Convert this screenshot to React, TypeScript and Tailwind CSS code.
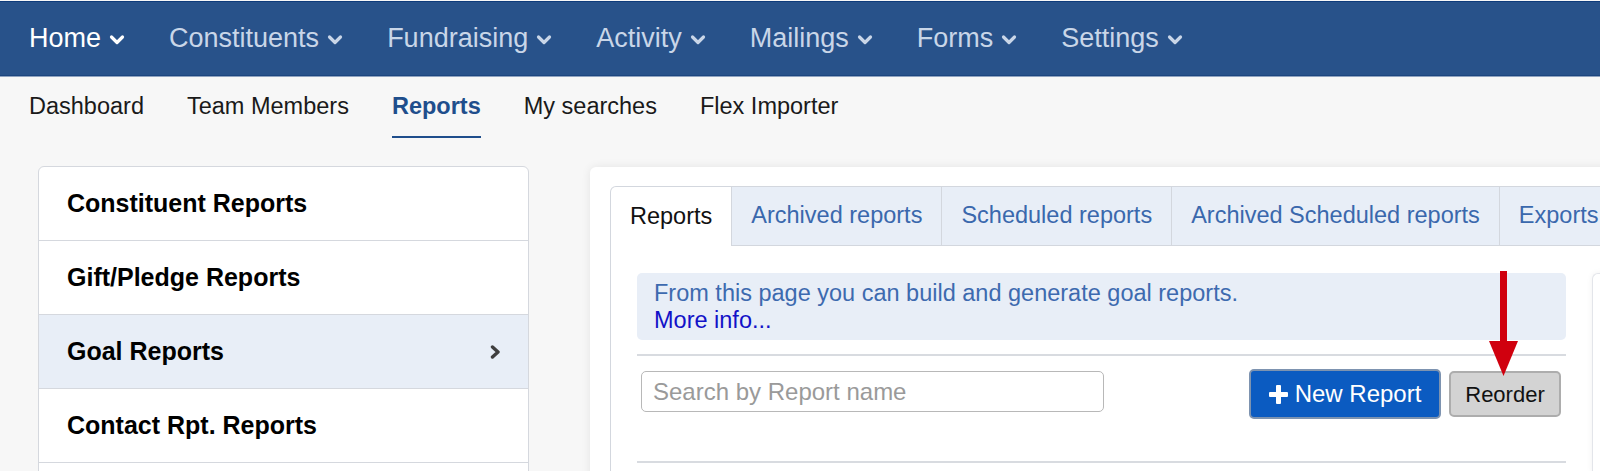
import React from 'react';

const topNav = ['Home', 'Constituents', 'Fundraising', 'Activity', 'Mailings', 'Forms', 'Settings'];
const subNav = ['Dashboard', 'Team Members', 'Reports', 'My searches', 'Flex Importer'];
const reportGroups = ['Constituent Reports', 'Gift/Pledge Reports', 'Goal Reports', 'Contact Rpt. Reports', ''];
const tabs = ['Reports', 'Archived reports', 'Scheduled reports', 'Archived Scheduled reports', 'Exports'];

function ChevronDown({ className }: { className?: string }) {
  return (
    <svg width="16" height="12" viewBox="0 0 16 12" className={className}>
      <polyline points="2.5,3 8,8.5 13.5,3" fill="none" stroke="currentColor" strokeWidth="3.2" strokeLinecap="round" strokeLinejoin="round" />
    </svg>
  );
}

function ChevronRight() {
  return (
    <svg width="11" height="14" viewBox="0 0 11 14" className="text-[#3f3f3f]">
      <polyline points="2.5,2 8,7 2.5,12" fill="none" stroke="currentColor" strokeWidth="3.4" strokeLinecap="round" strokeLinejoin="round" />
    </svg>
  );
}

export default function App() {
  return (
    <div className="relative h-[471px] w-[1600px] overflow-hidden bg-[#f7f7f7] font-['Liberation_Sans',Arial,sans-serif]">
      {/* Top navigation */}
      <div className="mt-px border-t border-[#0e3b7b] bg-[#28528a] border-b border-b-[#1c467f]">
        <div className="flex h-[73px] items-center gap-[44px] pl-[29px]">
          {topNav.map((item, i) => (
            <div key={item} className={`flex items-center text-[27px] ${i === 0 ? 'text-white' : 'text-[#c9d6e8]'}`}>
              <span>{item}</span>
              <ChevronDown className="ml-[8px] mt-[3px]" />
            </div>
          ))}
        </div>
      </div>
      <div className="h-px bg-[#8fa3c0]" />

      {/* Sub navigation */}
      <div className="flex gap-[43px] pl-[29px] pt-[16px]">
        {subNav.map((item) => (
          <div
            key={item}
            className={`border-b-2 pb-[17px] text-[23.5px] leading-[26px] ${
              item === 'Reports' ? 'border-[#1f4e8c] font-bold text-[#1f4e8c]' : 'border-transparent text-[#1a1a1a]'
            }`}
          >
            {item}
          </div>
        ))}
      </div>

      {/* Main */}
      <div className="mt-[28px] flex pl-[38px]">
        <div className="w-[491px] shrink-0 overflow-hidden rounded-[6px] border border-[#d5d8de] bg-white">
          {reportGroups.map((g, i) => (
            <div
              key={i}
              className={`flex h-[74px] items-center justify-between border-b border-[#d5d8de] pl-[28px] pr-[27px] text-[25px] font-bold text-black ${
                g === 'Goal Reports' ? 'bg-[#e8eef7]' : ''
              }`}
            >
              <span>{g}</span>
              {g === 'Goal Reports' && <ChevronRight />}
            </div>
          ))}
        </div>

        <div className="ml-[61px] mt-px w-[1100px] shrink-0 rounded-tl-[6px] bg-white pl-[20px] pt-[19px] shadow-[0_0_10px_rgba(0,0,0,0.08)]">
          {/* Tabs */}
          <div className="flex h-[60px]">
            {tabs.map((t, i) => (
              <div
                key={t}
                className={`flex shrink-0 items-center px-[19px] text-[23.5px] ${
                  i === 0
                    ? 'rounded-tl-[6px] border-l border-t border-r border-[#d3d7de] bg-white text-[#111]'
                    : 'border-t border-r border-b border-[#d3d7de] bg-[#e8eef7] text-[#3a68ad]'
                }`}
              >
                {t}
              </div>
            ))}
            <div className="flex-1 border-b border-[#d3d7de]" />
          </div>

          {/* Tab pane */}
          <div className="flex border-l border-[#d3d7de] pl-[26px] pt-[27px]">
            <div className="w-[929px] shrink-0">
              <div className="h-[67px] rounded-[5px] bg-[#e8eef7] px-[17px] py-[7px] text-[23.5px] leading-[26.5px]">
                <div className="text-[#3d6aaf]">From this page you can build and generate goal reports.</div>
                <div className="text-[#1212c8]">More info...</div>
              </div>
              <div className="mt-[14px] h-[2px] bg-[#d8dbe0]" />
              <div className="mt-[13px] flex items-start">
                <input
                  type="text"
                  placeholder="Search by Report name"
                  className="ml-[4px] mt-[2px] h-[41px] w-[463px] rounded-[5px] border border-[#b8b8b8] bg-white pl-[11px] text-[24px] outline-none placeholder:text-[#9a9a9a]"
                />
                <button className="ml-auto flex h-[50px] w-[192px] items-center justify-center gap-[7px] rounded-[5px] border-2 border-[#7d93b0] bg-[#0b5bc1] text-[24px] text-white">
                  <svg width="19" height="19" viewBox="0 0 19 19">
                    <rect x="7" y="0" width="5" height="19" rx="1" fill="white" />
                    <rect x="0" y="7" width="19" height="5" rx="1" fill="white" />
                  </svg>
                  <span>New Report</span>
                </button>
                <button className="ml-[8px] mr-[5px] mt-[2px] h-[46px] w-[112px] rounded-[5px] border-2 border-[#adadad] bg-[#d3d3d3] text-[22px] text-[#111]">
                  Reorder
                </button>
              </div>
              <div className="mt-[42px] h-[2px] bg-[#d8dbe0]" />
            </div>
            <div className="ml-[26px] h-[200px] w-[100px] shrink-0 rounded-tl-[6px] border-l border-t border-[#e3e5ea] bg-white shadow-[0_0_6px_rgba(0,0,0,0.06)]" />
          </div>
        </div>
      </div>

      {/* Annotation arrow */}
      <svg className="absolute left-[1486px] top-[271px]" width="34" height="106" viewBox="0 0 34 106">
        <rect x="14" y="0" width="7" height="72" fill="#d0000e" />
        <polygon points="3,70 32,70 17.5,105" fill="#d0000e" />
      </svg>
    </div>
  );
}
